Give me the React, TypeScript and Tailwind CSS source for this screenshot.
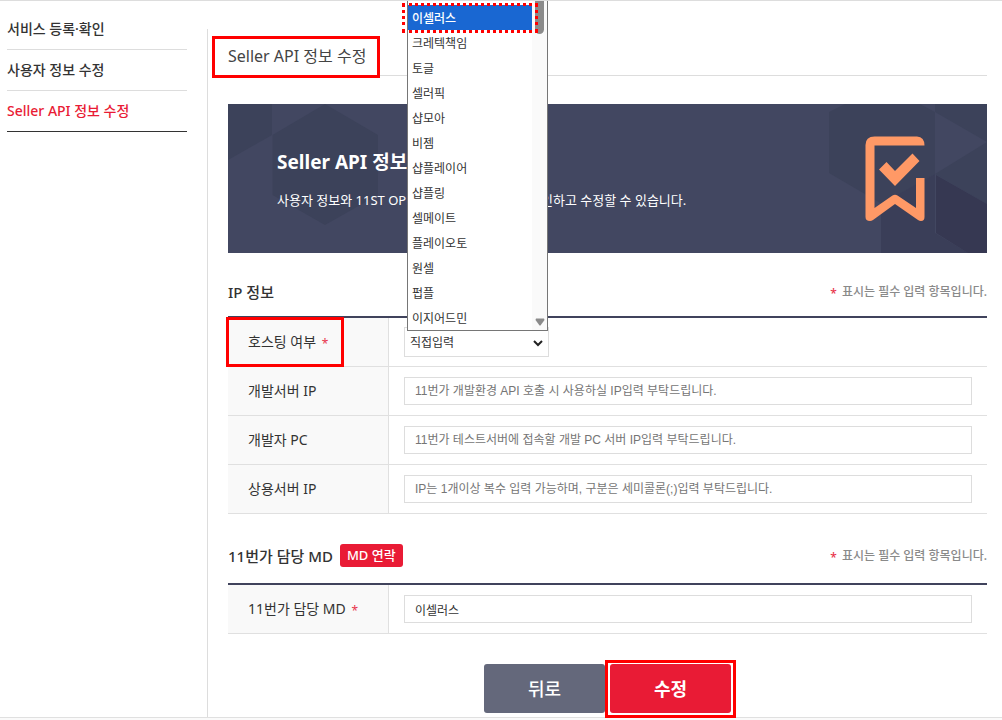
import React from 'react';

const menu = [
  { label: '서비스 등록·확인', active: false },
  { label: '사용자 정보 수정', active: false },
  { label: 'Seller API 정보 수정', active: true },
];

const hostingOptions = [
  '이셀러스',
  '크레텍책임',
  '토글',
  '셀러픽',
  '샵모아',
  '비젬',
  '샵플레이어',
  '샵플링',
  '셀메이트',
  '플레이오토',
  '원셀',
  '펍플',
  '이지어드민',
];

const ipFields = [
  { id: 'dev-server', label: '개발서버 IP', hint: '11번가 개발환경 API 호출 시 사용하실 IP입력 부탁드립니다.' },
  { id: 'dev-pc', label: '개발자 PC', hint: '11번가 테스트서버에 접속할 개발 PC 서버 IP입력 부탁드립니다.' },
  { id: 'live-server', label: '상용서버 IP', hint: 'IP는 1개이상 복수 입력 가능하며, 구분은 세미콜론(;)입력 부탁드립니다.' },
];

const thClass =
  'relative h-[49px] w-[161px] border-r border-b border-[#e0e0e0] bg-[#f9f9f9] pl-5 text-left text-sm font-normal text-[#333]';
const tdClass = 'h-[49px] border-b border-[#e0e0e0] px-[15px]';
const inputClass =
  "block h-7 w-full border border-[#ddd] bg-white px-2.5 font-['Liberation_Sans','Noto_Sans_CJK_KR',sans-serif] text-xs text-[#333] outline-none placeholder:text-[#757575]";

function Star() {
  return <span className="mx-0.5 inline-block align-bottom text-xs leading-4 text-[#e8344c]">*</span>;
}

function RequiredNote() {
  return (
    <p className="text-xs leading-5 font-medium text-[#8a8a8a]">
      <Star /> 표시는 필수 입력 항목입니다.
    </p>
  );
}

function Banner() {
  return (
    <section className="relative mt-7 h-[149px] overflow-hidden bg-[#424761] text-white">
      <svg className="absolute top-0 left-0" width="160" height="149" viewBox="0 0 160 149" aria-hidden="true">
        <g fill="#3c425a">
          <path d="M0 0H44V31L0 56Z" />
          <path d="M97 0L150 31V91L97 121L44.500 91V31Z" />
        </g>
      </svg>
      <svg className="absolute top-0 right-0" width="159" height="149" viewBox="600 0 159 149" aria-hidden="true">
        <path d="M617 0H692L707 8V70L654 100L601 69V8Z" fill="#3c425a" />
        <path d="M707 0H759V38L707 8Z" fill="#3c425a" />
        <path d="M759 38V100L707 70Z" fill="#3c425a" />
        <path d="M653 149V100L707 70V129L740 149Z" fill="#3a3e58" />
        <path d="M708 71L759 100V149H740L708 129Z" fill="#363852" />
        <path
          d="M696.500 41.500H646.500V104L664.500 91.500Q667 90 669.500 91.500L688 104V74H696.500V113Q696.500 117 693 117Q691.500 117 690 116L667 100L645 116Q643.500 117 642 117Q637.500 117 637.500 113V41Q637.500 32.500 646.500 32.500H689Q696.500 33 696.500 41.500Z"
          fill="#ff9966"
        />
        <path d="M651 65.500L658.500 58L667 67L684.500 49.500L691.500 57L667 82Z" fill="#ff9966" />
      </svg>
      <div className="relative pt-11 pl-[49px]">
        <h2 className="text-[19px] leading-7 font-bold">Seller API 정보 수정</h2>
        <p className="mt-3.5 text-[13px] leading-5">
          사용자 정보와 11ST OPEN API 서비스 정보를 확인하고 수정할 수 있습니다.
        </p>
      </div>
    </section>
  );
}

function HostingSelect() {
  return (
    <div className="relative w-[145px]">
      <select
        id="hosting"
        defaultValue="직접입력"
        className="block h-[30px] w-full appearance-none border border-[#ddd] bg-white pt-0.5 pl-[5px] text-xs text-[#333] outline-none"
      >
        <option>직접입력</option>
        {hostingOptions.map((name) => (
          <option key={name}>{name}</option>
        ))}
      </select>
      <svg
        className="pointer-events-none absolute top-[13px] right-1.5"
        width="10"
        height="7"
        viewBox="0 0 10 7"
        fill="none"
        stroke="#222"
        strokeWidth="2"
        aria-hidden="true"
      >
        <path d="M1 1L5 5L9 1" />
      </svg>
      <div className="absolute bottom-[26px] left-[3px] z-10 flex w-[141px] border border-[#767676] bg-white pt-2.5">
        <ul role="listbox" aria-label="호스팅 업체" className="flex-1 text-xs text-[#333]">
          {hostingOptions.map((name, i) => (
            <li
              key={name}
              role="option"
              aria-selected={i === 0}
              className={
                i === 0
                  ? 'relative bg-[#1967d2] pt-0.5 pl-1 leading-[23px] font-medium text-white'
                  : 'pt-0.5 pl-1 leading-[23px]'
              }
            >
              {name}
              {i === 0 && (
                <span className="absolute -inset-x-1.5 -top-0.5 -bottom-[3px] border-3 border-dotted border-[#f00]" />
              )}
            </li>
          ))}
        </ul>
        <div className="-mt-2.5 flex w-[15px] flex-col items-center justify-between bg-[#fafafa] pb-1">
          <span className="h-[39px] w-[9px] rounded-b-full bg-[#8b8b8b]" />
          <svg width="10" height="8" viewBox="0 0 10 8" aria-hidden="true">
            <path d="M1 0.500H9L9.500 2L5.500 7.500H4.500L0.500 2Z" fill="#8b8b8b" />
          </svg>
        </div>
      </div>
    </div>
  );
}

export default function App() {
  return (
    <div className="overflow-hidden border-t border-[#ddd] bg-white font-['Noto_Sans','Noto_Sans_CJK_KR',sans-serif] text-[#333]">
      <div className="flex border-b border-[#e0e0e0]">
        <aside className="mr-5 w-[187px] shrink-0 pt-2 pl-[7px]">
          <nav>
            <ul>
              {menu.map((item) => (
                <li
                  key={item.label}
                  className={item.active ? 'border-b border-[#333]' : 'border-b border-[#ddd]'}
                >
                  <a
                    href="#"
                    className={
                      item.active
                        ? 'block text-sm leading-10 font-medium text-[#e91b35]'
                        : 'block text-sm leading-10 font-medium text-[#333]'
                    }
                  >
                    {item.label}
                  </a>
                </li>
              ))}
            </ul>
          </nav>
        </aside>

        <main className="mt-7 min-w-0 flex-1 border-l border-[#ddd] pr-[15px] pb-1 pl-5">
          <header className="relative border-b border-[#ddd]">
            <h1 className="pt-2 text-base leading-[38px] font-normal text-[#444]">Seller API 정보 수정</h1>
            <span className="absolute top-[7px] -left-4 h-[42px] w-[168px] border-3 border-[#f00]" />
          </header>

          <Banner />

          <section>
            <div className="flex h-[63px] items-center justify-between pt-3.5">
              <h3 className="text-[15px] leading-6 font-medium">IP 정보</h3>
              <RequiredNote />
            </div>
            <table className="w-full table-fixed border-separate border-spacing-0 border-t-2 border-[#40435c]">
              <tbody>
                <tr>
                  <th scope="row" className={thClass}>
                    <label htmlFor="hosting">
                      호스팅 여부 <Star />
                    </label>
                    <span className="absolute -top-px -left-0.5 h-[50px] w-[118px] border-3 border-[#f00]" />
                  </th>
                  <td className={tdClass}>
                    <HostingSelect />
                  </td>
                </tr>
                {ipFields.map((f) => (
                  <tr key={f.id}>
                    <th scope="row" className={thClass}>
                      <label htmlFor={f.id}>{f.label}</label>
                    </th>
                    <td className={tdClass}>
                      <input id={f.id} type="text" placeholder={f.hint} className={inputClass} />
                    </td>
                  </tr>
                ))}
              </tbody>
            </table>
          </section>

          <section>
            <div className="flex h-[69px] items-center justify-between pt-3.5">
              <div className="flex items-center gap-[7px]">
                <h3 className="text-[15px] leading-6 font-medium">11번가 담당 MD</h3>
                <button type="button" className="h-[23px] rounded-[3px] bg-[#e91b35] px-[7px] text-[13px] font-medium text-white">
                  MD 연락
                </button>
              </div>
              <RequiredNote />
            </div>
            <table className="w-full table-fixed border-separate border-spacing-0 border-t-2 border-[#40435c]">
              <tbody>
                <tr>
                  <th scope="row" className={thClass}>
                    <label htmlFor="md">
                      11번가 담당 MD <Star />
                    </label>
                  </th>
                  <td className={tdClass}>
                    <input id="md" type="text" defaultValue="이셀러스" className={inputClass} />
                  </td>
                </tr>
              </tbody>
            </table>
          </section>

          <div className="mt-[30px] flex justify-center gap-[5px]">
            <button type="button" className="h-[49px] w-[121px] rounded-[3px] bg-[#64687b] text-lg font-medium text-white">
              뒤로
            </button>
            <div className="relative">
              <button type="button" className="h-[49px] w-[121px] rounded-[3px] bg-[#e91b35] text-lg font-bold text-white">
                수정
              </button>
              <span className="pointer-events-none absolute -inset-x-[5px] -top-1 -bottom-[5px] border-3 border-[#f00]" />
            </div>
          </div>
        </main>
      </div>
      <footer className="h-1 bg-[#fafafa]" />
    </div>
  );
}
